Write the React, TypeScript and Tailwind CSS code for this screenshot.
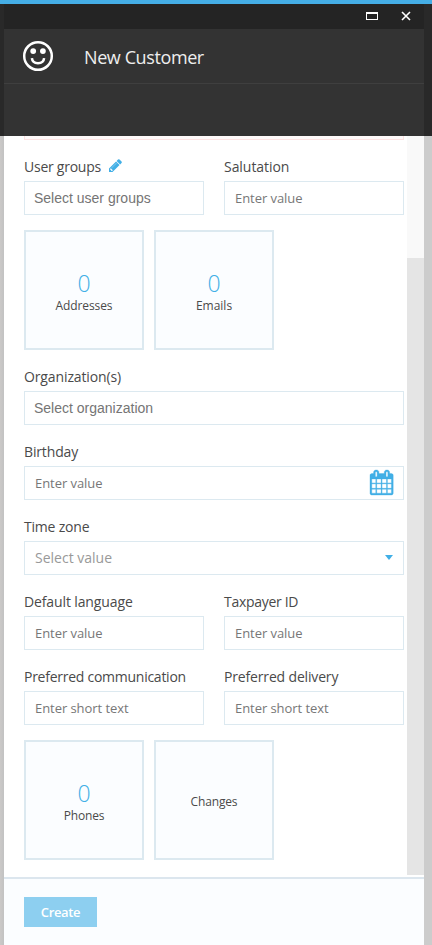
import type { ReactNode } from "react";

const BODY = "font-['Open_Sans','Noto_Sans',sans-serif]";
const ARIAL = "font-['Liberation_Sans',Arial,sans-serif]";

function Smiley() {
  return (
    <svg width="32" height="32" viewBox="0 0 32 32" fill="none" className="block">
      <circle cx="16" cy="16" r="13.8" stroke="#fff" strokeWidth="2.5" />
      <circle cx="11.2" cy="11.1" r="2.9" fill="#fff" />
      <circle cx="20.9" cy="11.1" r="2.9" fill="#fff" />
      <path d="M9.9 18.2C10.2 21.4 12.7 23.2 16 23.2S21.8 21.4 22.1 18.2" stroke="#fff" strokeWidth="2.5" />
    </svg>
  );
}

function Pencil() {
  return (
    <svg width="13" height="13" viewBox="0 128 1536 1536" fill="#41afe6" className="block">
      <path d="M363 1536l91-91-235-235-91 91v107h128v128h107zM886 608q0-22-22-22-10 0-17 7l-542 542q-7 7-7 17 0 22 22 22 10 0 17-7l542-542q7-7 7-17zM832 416l416 416-832 832h-416v-416zM1515 512q0 53-37 90l-166 166-416-416 166-165q36-38 90-38 53 0 91 38l235 234q37 39 37 91z" />
      <path d="M300 1150L870 580" stroke="#41afe6" strokeWidth="70" />
    </svg>
  );
}

function Calendar() {
  return (
    <svg width="23.2" height="25" viewBox="0 0 1664 1792" fill="#41afe6" stroke="#41afe6" strokeWidth="25" className="block overflow-visible">
      <path d="M128 1664h288v-288h-288v288zM480 1664h320v-288h-320v288zM128 1312h288v-320h-288v320zM480 1312h320v-320h-320v320zM128 928h288v-288h-288v288zM864 1664h320v-288h-320v288zM480 928h320v-288h-320v288zM1248 1664h288v-288h-288v288zM864 1312h320v-320h-320v320zM512 448v-288q0-13-9.5-22.5t-22.5-9.5h-64q-13 0-22.5 9.5t-9.5 22.5v288q0 13 9.5 22.5t22.5 9.5h64q13 0 22.5-9.5t9.5-22.5zM1248 1312h288v-320h-288v320zM864 928h320v-288h-320v288zM1248 928h288v-288h-288v288zM1280 448v-288q0-13-9.5-22.5t-22.5-9.5h-64q-13 0-22.5 9.5t-9.5 22.5v288q0 13 9.5 22.5t22.5 9.5h64q13 0 22.5-9.5t9.5-22.5zM1664 384v1280q0 52-38 90t-90 38h-1408q-52 0-90-38t-38-90v-1280q0-52 38-90t90-38h128v-96q0-66 47-113t113-47h64q66 0 113 47t47 113v96h384v-96q0-66 47-113t113-47h64q66 0 113 47t47 113v96h128q52 0 90 38t38 90z" />
    </svg>
  );
}

type FieldProps = {
  label: string;
  labelClass?: string;
  text: string;
  textClass: string;
  icon?: ReactNode;
  trailing?: ReactNode;
};

function Field({ label, labelClass = "", text, textClass, icon, trailing }: FieldProps) {
  return (
    <div className="min-w-0 flex-1">
      <div className="flex h-6 items-start">
        <span className={`whitespace-nowrap text-[14px] leading-5 text-[#4a4a4a] ${labelClass}`}>{label}</span>
        {icon}
      </div>
      <div className="flex h-[34px] items-center justify-between border border-[#dce9f0] bg-white">
        <span className={`whitespace-nowrap ${textClass}`}>{text}</span>
        {trailing}
      </div>
    </div>
  );
}

function Tile({ count, label, labelClass = "" }: { count?: string; label: string; labelClass?: string }) {
  return (
    <div className="flex size-[120px] flex-col items-center justify-center border-2 border-[#dce9f0] bg-[#fbfdff]">
      {count && (
        <span className="mt-[5px] h-[26px] text-[23px] font-light leading-[26px] text-[#41afe6]">{count}</span>
      )}
      <span className={`whitespace-nowrap text-[12px] text-[#4a4a4a] ${count ? "h-5 leading-5" : "pt-[3px] leading-5"} ${labelClass}`}>
        {label}
      </span>
    </div>
  );
}

const enter = "pl-[10px] text-[13px] leading-5 text-[#777] tracking-[-0.06px]";
const select = `pl-[9px] text-[14px] leading-5 text-[#757575] ${ARIAL}`;

export default function App() {
  return (
    <div className={`flex h-[945px] w-[432px] flex-col overflow-hidden bg-[#ccc] ${BODY}`}>
      <div className="h-1 shrink-0 bg-[#45aee6]" />
      <header className="h-[132px] shrink-0 bg-[#292929] pl-1 pr-2">
        <div className="flex h-[25px] items-start justify-end bg-[#242424] pr-[13px]">
          <svg width="12" height="8" viewBox="0 0 12 8" className="mt-2 block">
            <path d="M0 0h12v8H0zM1 2v5h10V2z" fill="#fff" fillRule="evenodd" />
          </svg>
          <svg width="10" height="10" viewBox="0 0 10 10" className="ml-[23px] mt-[7px] block">
            <path d="M1 1L9 9M9 1L1 9" stroke="#fff" strokeWidth="1.6" />
          </svg>
        </div>
        <div className="flex h-[55px] items-center border-b border-[#3f3f3f] bg-[#333] pl-[18px]">
          <Smiley />
          <h1 className="ml-[30px] mt-[2px] whitespace-nowrap text-[18px] leading-6 tracking-[-0.4px] text-[#eee]">
            New Customer
          </h1>
        </div>
        <div className="h-[52px] bg-[#333]" />
      </header>

      <div className="flex min-h-0 flex-1 bg-[#ccc] pr-2">
        <div className="w-1 shrink-0 bg-linear-to-r from-[#cbc9c8] to-[#c2c2c2]" />
        <div className="flex min-w-0 flex-1 flex-col bg-white">
          <div className="flex h-[741px] shrink-0 justify-between">
            <main className="w-[400px] pl-5">
              <div className="h-1 border border-t-0 border-[#fde3e3] bg-[#fffafa]" />
              <div className="mt-[17px] flex gap-5">
                <Field
                  label="User groups"
                  labelClass="w-[77px] tracking-[-0.25px]"
                  icon={<span className="ml-2 mt-[2px]"><Pencil /></span>}
                  text="Select user groups"
                  textClass={select}
                />
                <Field label="Salutation" labelClass="tracking-[-0.05px]" text="Enter value" textClass={enter} />
              </div>
              <div className="mt-[15px] flex gap-[10px]">
                <Tile count="0" label="Addresses" labelClass="tracking-[-0.1px]" />
                <Tile count="0" label="Emails" />
              </div>
              <div className="mt-[17px] flex">
                <Field label="Organization(s)" labelClass="tracking-[-0.12px]" text="Select organization" textClass={select} />
              </div>
              <div className="mt-[17px] flex">
                <Field
                  label="Birthday"
                  labelClass="tracking-[-0.15px]"
                  text="Enter value"
                  textClass={enter}
                  trailing={<span className="mb-[2px] mr-[10px]"><Calendar /></span>}
                />
              </div>
              <div className="mt-[17px] flex">
                <Field
                  label="Time zone"
                  labelClass="tracking-[-0.2px]"
                  text="Select value"
                  textClass="pl-[10px] text-[14px] leading-5 text-[#999]"
                  trailing={
                    <svg width="8" height="5" viewBox="0 0 8 5" className="mb-px mr-[10px] block">
                      <path d="M0 0h8L4 5z" fill="#41afe6" />
                    </svg>
                  }
                />
              </div>
              <div className="mt-[17px] flex gap-5">
                <Field label="Default language" labelClass="tracking-[-0.12px]" text="Enter value" textClass={enter} />
                <Field label="Taxpayer ID" labelClass="tracking-[-0.3px]" text="Enter value" textClass={enter} />
              </div>
              <div className="mt-[17px] flex gap-5">
                <Field label="Preferred communication" labelClass="tracking-[-0.26px]" text="Enter short text" textClass={enter} />
                <Field label="Preferred delivery" labelClass="tracking-[-0.16px]" text="Enter short text" textClass={enter} />
              </div>
              <div className="mt-[15px] flex gap-[10px]">
                <Tile count="0" label="Phones" labelClass="tracking-[-0.2px]" />
                <Tile label="Changes" labelClass="tracking-[-0.15px]" />
              </div>
            </main>
            <div className="h-[739px] w-[17px] bg-[#f9f9f9] pt-[122px]">
              <div className="h-full bg-[#e5e5e5]" />
            </div>
          </div>
          <footer className="flex-1 border-t-2 border-[#dce6ee] bg-[#fbfdff] pl-5 pt-[18px]">
            <button className="flex h-[30px] w-[73px] items-center justify-center bg-[#8dcff0] pt-px text-[13px] font-semibold tracking-[-0.35px] text-white">
              Create
            </button>
          </footer>
        </div>
      </div>
    </div>
  );
}
